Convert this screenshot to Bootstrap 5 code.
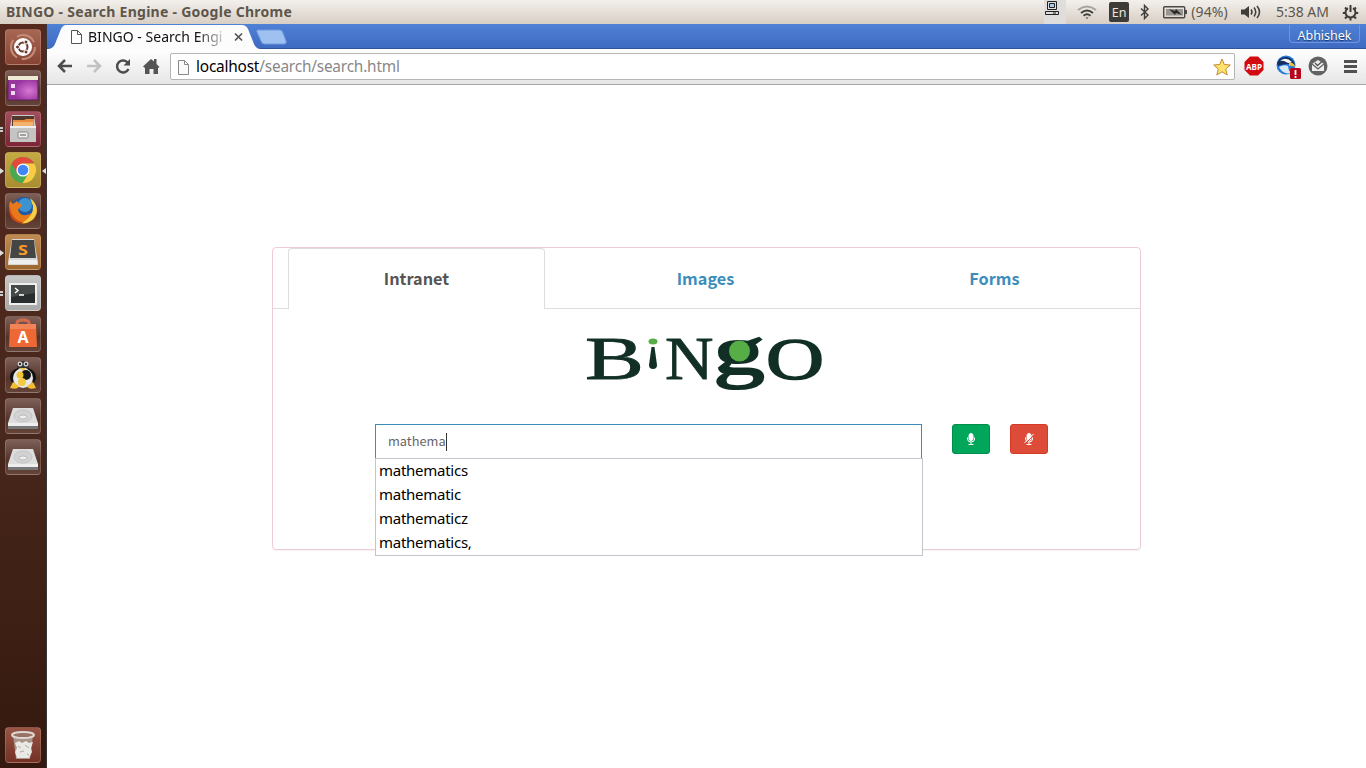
<!DOCTYPE html>
<html lang="en">
<head>
<meta charset="utf-8">
<meta name="viewport" content="width=device-width, initial-scale=1">
<title>BINGO - Search Engine</title>
<link href="https://cdn.jsdelivr.net/npm/bootstrap@5.3.0/dist/css/bootstrap.min.css" rel="stylesheet">
<style>
body{font-family:"Noto Sans",sans-serif;font-size:14px;line-height:1.2;background:#fff}
svg{display:block;flex:none;overflow:visible}
.topbar{height:24px;background:linear-gradient(#f3f0ec,#d8cec4);color:#5d564c;padding:0 7px 0 6px;white-space:nowrap}
.win-title{font-weight:700;font-size:14px;letter-spacing:.27px}
.status{font-size:14px}
.lang{width:20px;height:20px;background:#3c3b37;color:#eee7dc;border-radius:2px;font-size:12.5px;margin-left:12px}
.tray{width:22px;height:24px;background:#dfdedd}
.launcher{width:47px;background:linear-gradient(#55291e,#48271c 55%,#35190e);border-right:1px solid #39363a;padding:5px 0 5px 5px}
.tile{width:36px;height:36px;margin-bottom:5px;border-radius:4px;border:1px solid rgba(255,255,255,.16);background:linear-gradient(#7e6058,#543329 60%,#644338);position:relative;flex:none}
.tile svg{width:36px;height:36px;margin:-1px}
.pip::before{content:"";position:absolute;left:-6px;top:15px;border-left:4px solid #ddd;border-top:3px solid transparent;border-bottom:3px solid transparent}
.pips::before{content:"";position:absolute;left:-6px;top:15px;width:3px;height:5px;border-top:2px solid #ccc;border-bottom:2px solid #ccc}
.focus-pip::after{content:"";position:absolute;right:-6px;top:15px;border-right:4px solid #ddd;border-top:3px solid transparent;border-bottom:3px solid transparent}
.tabstrip{height:25px;background:linear-gradient(#4f81d6,#3f6bc2);border-bottom:1px solid #2f549c}
.page-tab{width:206px;height:25px;margin-bottom:-1px;position:relative}
.page-tab>svg{position:absolute;left:0;top:0}
.tab-text{position:relative;width:137px;margin-left:41px;white-space:nowrap;font-size:14px;line-height:25px;color:#111;letter-spacing:.02px;-webkit-mask-image:linear-gradient(90deg,#000 108px,rgba(0,0,0,.15) 137px);mask-image:linear-gradient(90deg,#000 108px,rgba(0,0,0,.15) 137px)}
.user{width:71px;height:18px;margin:1px 6px 0 0;border:1px solid #6e95de;border-top:0;border-radius:0 0 4px 4px;color:#fff;font-size:12.5px;padding-top:3px;text-shadow:0 1px 1px #173568}
.toolbar{height:36px;background:linear-gradient(#fff,#e6e6e6);border-bottom:1px solid #a6a6a6;padding:0 9px 0 9px}
.toolbar>svg{position:relative;top:-.5px}
.omnibox{height:27px;border:1px solid #b5b5b5;border-radius:2px;background:#fff;margin-left:9px;font-size:15.4px;letter-spacing:-.2px;color:#888;padding:0 4px 0 6px}
.omnibox .host{color:#000}
.url{padding-top:1px}
.page{padding-top:162px}
.search-panel{width:869px;height:303px;margin-left:225px;border:1px solid #efccd3;border-radius:4px;box-shadow:0 1px 1px rgba(0,0,0,.05)}
.source{font-family:"Noto Sans CJK JP","Noto Sans CJK SC",sans-serif}
.modes{height:61px;border-bottom:1px solid #ddd;font-size:16.3px;font-weight:700;color:#3c8dbc}
.mode{width:289px;padding:0 17px 0 15px}
.mode span{height:61px;line-height:61px;display:block;text-align:center}
.mode .current{color:#555;background:#fff;border:1px solid #ddd;border-bottom:0;border-radius:4px 4px 0 0;line-height:59px}
.logo-row{height:115px;padding-left:313px;padding-top:27px}
.query{width:547px;height:35px;border:1px solid #3c8dbc;color:#666;font-size:12.8px;padding-left:12px}
.query span{margin-top:-1px}
.caret{width:1px;height:18px;background:#333}
.suggest{top:34px;left:0;width:548px;height:98px;background:#fff;border:1px solid #c3c5cc;color:#000;font-size:15px;letter-spacing:-.26px;line-height:24px;padding-left:3px}
.suggest div{position:relative;top:-1px}
.voice{width:38px;height:30px;padding:0;border-radius:3px}
.go{background:#00a65a;border-color:#008d4c}
.stop{background:#dd4b39;border-color:#d73925}
</style>
</head>
<body class="vh-100 overflow-hidden d-flex flex-column">
<header class="topbar d-flex align-items-center flex-shrink-0">
  <span class="win-title">BINGO - Search Engine - Google Chrome</span>
  <span class="tray ms-auto"><svg width="22" height="24" fill="none" stroke="#222"><path d="M3.500 1.500h9v8h-9zM1.500 11.500h13v3h-13zM9 13h3" /><path d="M5.500 3.500h5v4h-5z" fill="#a9cdec"/></svg></span>
  <svg width="20" height="16" viewBox="0 0 20 16" fill="none" stroke="#3f3d39" stroke-width="1.8" style="margin-left:11px"><path d="M1 6q9-7 18 0" opacity=".4"/><path d="M4 9q6-5 12 0M6.500 11.700q3.500-3 7 0"/><path d="M8.500 13.500h3L10 15z" fill="#3f3d39" stroke="none"/></svg>
  <span class="lang d-flex align-items-center justify-content-center">En</span>
  <svg width="10" height="16" viewBox="0 0 10 16" fill="none" stroke="#3f3d39" stroke-width="1.400" style="margin-left:11px"><path d="M1 4.500l7 6.500-3.500 3.500V1.500L8 5l-7 6.500"/></svg>
  <svg width="25" height="14" viewBox="0 0 25 14" style="margin-left:13px"><rect x=".7" y="1.700" width="21" height="11" rx="1" fill="none" stroke="#4b4843" stroke-width="1.400"/><path d="M22 5h2v4h-2z" fill="#4b4843"/><path d="M3 4h17v6.500H3z" fill="#999591"/><path d="M6 4l6 2 1-2 6 6-6-2-1 2z" fill="#2b2a28"/></svg>
  <span class="status" style="margin-left:3px;letter-spacing:.15px">(94%)</span>
  <svg width="20" height="16" viewBox="0 0 20 16" style="margin-left:13px"><path d="M0 5.500h3.500L8 2v12l-4.500-3.500H0z" fill="#3f3d39"/><path d="M10 5.500q2 2.500 0 5M13 3.500q3.500 4.500 0 9M16 2q5 6 0 12" fill="none" stroke="#3f3d39" stroke-width="1.500"/></svg>
  <span class="status" style="margin-left:15px;letter-spacing:0">5:38 AM</span>
  <svg width="17" height="17" viewBox="0 0 17 17" fill="none" stroke="#3f3d39" stroke-width="2" style="margin-left:13px"><path d="M6 4.200a5 5 0 1 0 5 0"/><path d="M8.500 1v7M.8 9h3M13.200 9h3M3 14.500l2-2M14 14.500l-2-2M8.500 13.500v3M3 3.500l2 2M14 3.500l-2 2"/></svg>
</header>
<div class="d-flex flex-grow-1">
  <aside class="launcher d-flex flex-column flex-shrink-0">
    <div class="tile" style="background:linear-gradient(#a76753,#884332)"><svg viewBox="0 0 36 36"><circle cx="18" cy="18" r="12" fill="none" stroke="#c18d7d" stroke-width="2" stroke-dasharray="20 5"/><circle cx="18" cy="18" r="9" fill="#fff"/><circle cx="18" cy="18" r="4.500" fill="none" stroke="#6b3429" stroke-width="2"/><g fill="#6b3429" stroke="#fff"><circle cx="12.500" cy="18" r="2"/><circle cx="21" cy="13" r="2"/><circle cx="21" cy="23" r="2"/></g></svg></div>
    <div class="tile"><svg viewBox="0 0 36 36"><defs><radialGradient id="wall" cx=".7" cy=".6"><stop stop-color="#d878d4"/><stop offset="1" stop-color="#9a35a0"/></radialGradient></defs><path d="M3 7h30v23H3z" fill="url(#wall)" stroke="#5b2257"/><path d="M3 6h30v4H3z" fill="#eee9d2"/><path d="M6 14h4v4H6zM6 21h4v4H6z" fill="#f3d9f3"/></svg></div>
    <div class="tile pips" style="background:linear-gradient(#a34e5c,#7b2536)"><svg viewBox="0 0 36 36"><path d="M7 4h22l2 13v14H5V17z" fill="#c9c9c7"/><path d="M7 5h22v11H7z" fill="#50382d"/><path d="M8 9h11l2-1h8v7H8z" fill="#e98b3d"/><path d="M8 11h20v5H8z" fill="#f3b36e"/><path d="M5 15h26v16H5z" fill="#c4c4c2"/><path d="M5 15h26v2H5z" fill="#eee"/><rect x="13" y="21" width="10" height="6" rx="1" fill="#eee" stroke="#888"/><path d="M15 24h6" stroke="#555"/></svg></div>
    <div class="tile pip focus-pip" style="background:linear-gradient(#c5a943,#aa8d31)"><svg viewBox="0 0 36 36"><circle cx="18" cy="18" r="13" fill="#4aa752"/><path d="M6.700 11.500A13 13 0 0 1 29.300 11.500H18l-5.600 9.700z" fill="#e34a3c"/><path d="M29.300 11.500A13 13 0 0 1 17.600 31l6-9.800A6.500 6.500 0 0 0 18 11.500z" fill="#fbcb43"/><circle cx="18" cy="18" r="6.600" fill="#fff"/><circle cx="18" cy="18" r="5.300" fill="#4285f4"/></svg></div>
    <div class="tile"><svg viewBox="0 0 36 36"><circle cx="19" cy="17" r="13" fill="#205aa5"/><circle cx="20" cy="12" r="7" fill="#3d93cf"/><path d="M27 7q9 10 2 19-11 9-20 0Q2 18 5 8l3 3 4-3q1 3 5 3-1 4-4 5 1 7 8 6 8-1 8-7z" fill="#e97818"/><path d="M25 5q12 10 3 21-6 5-11 4 12-7 11-17z" fill="#f7d044"/><path d="M5 13q0 13 14 17Q6 31 4 18z" fill="#cf4515"/></svg></div>
    <div class="tile pip" style="background:linear-gradient(#bf8b51,#9d6830)"><svg viewBox="0 0 36 36"><path d="M7 5h22l4 23v3H3v-3z" fill="#d7d7d7"/><path d="M7 6h22l2 18H5z" fill="#454545"/><path d="M4 26h28v4H4z" fill="#eee"/><text transform="translate(18 20.500) scale(1.200 1)" text-anchor="middle" font-size="15" font-weight="700" fill="#ff9824" font-family="Noto Sans">S</text></svg></div>
    <div class="tile pips" style="background:linear-gradient(#c5c5c5,#a9a9a9)"><svg viewBox="0 0 36 36"><path d="M4 8h28v22H4z" fill="#eee"/><path d="M6 10h24v18H6z" fill="#292d2d"/><path d="M6 10h24v8L6 22z" fill="#454a49"/><path d="M10 13l3 2.500-3 2.500M14 20h5" fill="none" stroke="#fff" stroke-width="1.400"/></svg></div>
    <div class="tile"><svg viewBox="0 0 36 36"><path d="M12 12V7q0-3 6-3t6 3v5" fill="none" stroke="#d56b4d" stroke-width="3"/><path d="M5 9h26l1 22H4z" fill="#ed6834"/><path d="M5 8h26v5H5z" fill="#f18456"/><text x="18" y="27" text-anchor="middle" font-size="16" font-weight="700" fill="#fff" font-family="Noto Sans">A</text></svg></div>
    <div class="tile"><svg viewBox="0 0 36 36"><ellipse cx="18" cy="20" rx="13" ry="10" fill="#111"/><ellipse cx="18" cy="9" rx="6" ry="5" fill="#333"/><ellipse cx="18" cy="21" rx="10" ry="10" fill="#e8e8e8"/><circle cx="15" cy="7" r="2.500" fill="#ccc"/><circle cx="21" cy="7" r="2.500" fill="#ccc"/><circle cx="15" cy="7" r="1"/><circle cx="21" cy="7" r="1"/><path d="M14 11h8l-4 3z" fill="#e7c75b"/><circle cx="21" cy="18" r="5" fill="#171717"/><circle cx="15" cy="18" r="3.500" fill="#f2c535"/><circle cx="17" cy="25" r="4" fill="#f5c93f"/><path d="M5 31l3-6 6 4q-1 4-9 2zM31 31l-3-6-6 4q1 4 9 2z" fill="#f5bd32"/></svg></div>
    <div class="tile"><svg viewBox="0 0 36 36"><path d="M8 10h20l5 15v6H3v-6z" fill="#ddd"/><path d="M3 26h30v5H3z" fill="#777"/><path d="M3 25h30v3H3z" fill="#eee"/><ellipse cx="18" cy="18" rx="9" ry="6" fill="#d2d2d2" stroke="#c4c4c4"/><ellipse cx="18" cy="19" rx="4" ry="2" fill="#eee" stroke="#bbb"/></svg></div>
    <div class="tile"><svg viewBox="0 0 36 36"><path d="M8 10h20l5 15v6H3v-6z" fill="#ddd"/><path d="M3 26h30v5H3z" fill="#777"/><path d="M3 25h30v3H3z" fill="#eee"/><ellipse cx="18" cy="18" rx="9" ry="6" fill="#d2d2d2" stroke="#c4c4c4"/><ellipse cx="18" cy="19" rx="4" ry="2" fill="#eee" stroke="#bbb"/></svg></div>
    <div class="tile mt-auto mb-0" style="background:linear-gradient(#985444,#733225)"><svg viewBox="0 0 36 36"><path d="M8 8h20l-3 24H11z" fill="#a8948a"/><path d="M10 16l4-2 3 2 4-2 3 2 4-1-2 6 1 4-3 6H12l-2-6 2-4z" fill="#e8e8e4"/><path d="M13 19l3 2M20 18l4 3M15 25l4-1M22 27l2 1" stroke="#b7aaa2"/><ellipse cx="18" cy="8" rx="11" ry="3" fill="#9a7165" stroke="#ded7d2" stroke-width="2"/></svg></div>
  </aside>
  <div class="flex-grow-1 d-flex flex-column">
    <div class="tabstrip d-flex justify-content-between flex-shrink-0">
      <div class="d-flex">
        <div class="page-tab d-flex">
          <svg width="212" height="25"><path d="M0 25q6 0 8-5l6-15q2-4 5-4h176q4 0 6 4l6 15q2 5 7 5z" fill="#fcfcfc"/><path d="M24.500 6.500h6l4 4v9h-10zM30.500 6.500v4h4" fill="#fff" stroke="#555"/><path d="M188 9.500l7 7m0-7l-7 7" stroke="#555" stroke-width="1.700"/></svg>
          <span class="tab-text">BINGO - Search Engi</span>
        </div>
        <svg width="34" height="25"><path d="M5 6h22q2 0 3 3l3 8q1 3-2 3H11q-2 0-3-3L4 8q-1-2 1-2z" transform="translate(0 0)" fill="#9fc1f1" stroke="#6e9bdd"/></svg>
      </div>
      <div class="user d-flex align-items-center justify-content-center">Abhishek</div>
    </div>
    <div class="toolbar d-flex align-items-center flex-shrink-0">
      <svg width="105" height="18" viewBox="0 0 105 18" fill="none" stroke="#4d4d4d" stroke-width="2.500"><path d="M9 3L3 9l6 6M3 9h13"/><path d="M38 3l6 6-6 6M44 9H31" stroke="#c2c2c2"/><path d="M72 6A6 6 0 1 0 72.500 12"/><path d="M74 2v6.500h-6.500z" fill="#4d4d4d" stroke="none"/><path d="M87 9.500L95 2l3 2.500V2h2.500v5l3 3-1.500 1V17h-4.500v-5h-4v5H89v-6z" fill="#555" stroke="none"/></svg>
      <div class="omnibox d-flex align-items-center flex-grow-1">
        <svg width="13" height="16" style="margin-right:6px"><path d="M1.500 1.500h6l4 4v10h-10zM7.500 1.500v4h4" fill="#fafafa" stroke="#888"/></svg>
        <span class="url"><span class="host">localhost</span>/search/search.html</span>
        <svg class="ms-auto" width="18" height="18" viewBox="0 0 18 18" style="margin-right:-1px"><path d="M9 1l2.300 5.500 6 .5-4.600 4 1.500 6L9 13.800 3.800 17l1.500-6L.7 7l6-.5z" fill="#ffe26c" stroke="#c08b35"/></svg>
      </div>
      <svg width="20" height="20" viewBox="0 0 20 20" style="margin-left:9px"><path d="M6 .5h8l5.500 5.500v8L14 19.500H6L.5 14V6z" fill="#d10b10"/><text x="10" y="13.500" text-anchor="middle" font-size="9" font-weight="700" fill="#fff" textLength="16" lengthAdjust="spacingAndGlyphs" font-family="Noto Sans">ABP</text></svg>
      <svg width="26" height="24" viewBox="0 0 26 24" style="margin-left:12px"><circle cx="10" cy="11" r="9.500" fill="#257bdc"/><path d="M1 9q3-7 10-6 6 1 8 8-4-2-7-1-5 0-10 2z" fill="#172f5e"/><path d="M4 7q6-5 12 1-3 2-6 0-3-2-6-1z" fill="#f4f7fa"/><path d="M3 13q5-3 9-1 0 4 3 7-8 2-12-6z" fill="#d8e8f6"/><path d="M13 9q5-1 6 4-3-2-6-1z" fill="#f6bd38"/><rect x="14" y="14" width="11" height="11" rx="1.500" fill="#b7061b"/><path d="M19.500 16v5M19.500 22v2" stroke="#fff" stroke-width="1.800"/></svg>
      <svg width="20" height="20" viewBox="0 0 20 20" style="margin-left:6px"><circle cx="10" cy="10" r="9.500" fill="#626262"/><path d="M4 8l6-4 6 4v7H4z" fill="#eee"/><path d="M4 8l6 5 6-5" fill="none" stroke="#626262" stroke-width="1.300"/><path d="M7 7l2.500 2.500L13.500 6" fill="none" stroke="#555" stroke-width="1.300"/></svg>
      <svg width="14" height="14" style="margin-left:15px"><path d="M1 2.500h13M1 7.500h13M1 12.500h13" stroke="#505050" stroke-width="2.800"/></svg>
    </div>
    <main class="page flex-grow-1">
      <section class="search-panel">
        <nav class="modes source d-flex">
          <div class="mode"><span class="current">Intranet</span></div>
          <div class="mode"><span>Images</span></div>
          <div class="mode"><span>Forms</span></div>
        </nav>
        <div class="logo-row">
          <svg width="240" height="56" viewBox="0 0 240 56" fill="#122f26" font-family="Liberation Serif, serif">
            <g stroke="#122f26" stroke-width=".8">
            <text transform="translate(-1 43) scale(1.450 1)" font-size="61">B</text>
            <text transform="translate(79 43) scale(1.100 1)" font-size="61">N</text>
            <text transform="translate(180 42.500) scale(1.340 .98)" font-size="60" stroke-width="1.500">O</text>
            <text transform="translate(127.500 37.500) scale(1.480 1)" font-size="69" stroke-width="2.200">g</text></g>
            <ellipse cx="67" cy="5.500" rx="4.500" ry="3" fill="#58ae46"/>
            <path d="M65.500 11h3l2.500 18q0 4-4 4t-4-4z"/>
            <ellipse cx="153.500" cy="15" rx="10.500" ry="10.500" fill="#58ae46"/>
          </svg>
        </div>
        <div class="d-flex position-relative" style="margin-left:102px">
          <div class="query source d-flex align-items-center"><span>mathema</span><i class="caret"></i></div>
          <button class="btn voice go d-flex align-items-center justify-content-center" style="margin-left:30px" aria-label="Start"><svg width="10" height="12" viewBox="0 0 10 12" fill="none" stroke="#fff"><rect x="3" y=".5" width="4" height="7" rx="2" fill="#fff"/><path d="M1.500 4.500V6q0 3 3.500 3t3.500-3V4.500M5 9v2.500M2.500 11.500h5"/></svg></button>
          <button class="btn voice stop d-flex align-items-center justify-content-center" style="margin-left:20px" aria-label="Stop"><svg width="10" height="12" viewBox="0 0 10 12" fill="none" stroke="#fff"><rect x="3" y=".5" width="4" height="7" rx="2" fill="#fff"/><path d="M1.500 4.500V6q0 3 3.500 3t3.500-3V4.500M5 9v2.500M2.500 11.500h5"/><path d="M1.200 10.800l9-9" stroke="#dd4b39"/><path d="M.5 10l9-9"/></svg></button>
          <div class="suggest position-absolute"><div>mathematics</div><div>mathematic</div><div>mathematicz</div><div>mathematics,</div></div>
        </div>
      </section>
    </main>
  </div>
</div>
<script src="https://cdn.jsdelivr.net/npm/bootstrap@5.3.0/dist/js/bootstrap.bundle.min.js"></script>
</body>
</html>
